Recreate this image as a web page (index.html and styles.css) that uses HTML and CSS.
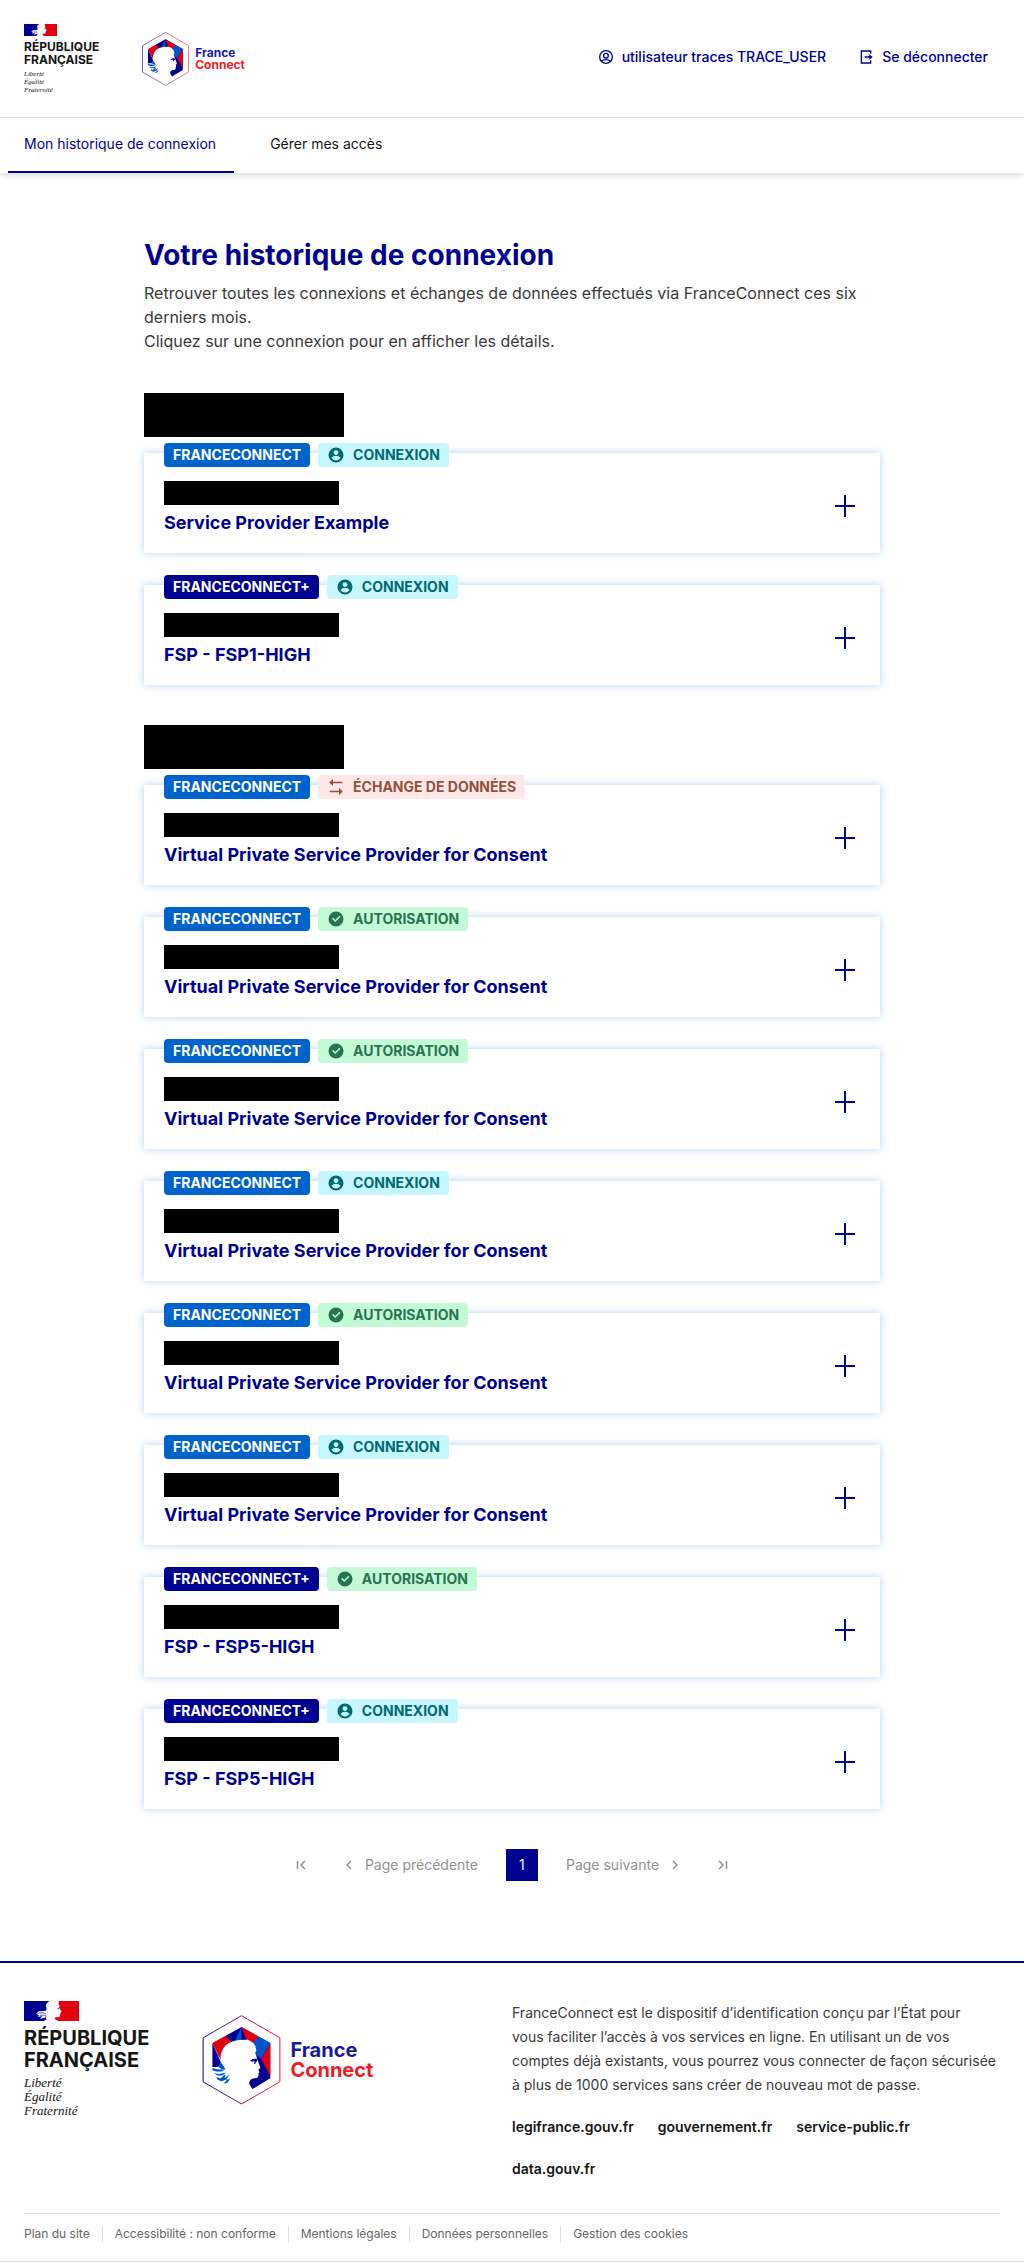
FILE: index.html
```html
<!DOCTYPE html>
<html lang="fr">
<head>
<meta charset="utf-8">
<meta name="viewport" content="width=device-width, initial-scale=1">
<title>Votre historique de connexion</title>
<link rel="stylesheet" href="styles.css">
</head>
<body>
<svg class="sprite" aria-hidden="true">
  <defs>
    <linearGradient id="hex-stroke" x1="0" y1="0" x2="1" y2="0">
      <stop offset="0" stop-color="#000091"/>
      <stop offset="0.1" stop-color="#1c1a94"/>
      <stop offset="0.9" stop-color="#e0253c"/>
      <stop offset="1" stop-color="#ed1c24"/>
    </linearGradient>
    <symbol id="flag" viewBox="0 0 165 60">
      <path fill="#fff" d="M0 0h165v60H0z"/>
      <path fill="#000091" d="M0 0h76l-6 5-5 8 3 8-2 8-9 1-13 1-8 8 9-2-7 6 8-1-5 6 14-3-7 8 12-2 8-5-4 5 5 3-10 6H0z"/>
      <path fill="none" stroke="#000091" stroke-width="2" d="M44 36l14-1 8 5M48 43l12-1 7 4"/>
      <path fill="#e1000f" d="M165 0h-62l2 4-2 5 4 5-2 5 3 5 5 8-4 3 1 4-3 2 1 5-4 3-9-1-3 5 5 4 6 3h62z"/>
      <path fill="#7d7d88" d="M98 22l8-2 1 2-3 5-2-2z"/>
    </symbol>
    <symbol id="hexagon" viewBox="12 14 236 272">
      <path fill="#fff" stroke="url(#hex-stroke)" stroke-width="3" d="M130 16l116 67v133l-116 67-116-67V83z"/>
      <path fill="#000091" d="M130 50L82 77l-7 30 75 0 6 60-6 50 13 21 54-33V99z"/>
      <path fill="#0053cc" d="M130 50l-24 50h42z"/>
      <path fill="#000091" d="M130 50v50h20z"/>
      <path fill="#e1000f" d="M42 99l40-22 20 22-20 40-12 18z"/>
      <path fill="#000091" d="M42 99l26 58-8 14H42z"/>
      <path fill="#e1000f" d="M130 50l53 30-12 16-20 10z"/>
      <path fill="#0053cc" d="M183 80l34 19-27 48-26-19v-32z"/>
      <path fill="#e1000f" d="M217 99v100l-27-51z"/>
      <path fill="#fff" d="M83 105q20-18 67-16l15 9 7 10 3 14-4 6 3 8 4 13 9 23-1 4-5 2 3 9-3 3 1 6-4 8-13 2-8 4-4 8 1 12 4 6 7 6-35 28-70-30 20-15 12-20 3-15-20-22-9-16q0-30 17-47z"/>
      <path fill="#0053cc" d="M68 157l14 22-12-2-10-6z"/>
      <path fill="#0053cc" d="M42 174l14 4 24 1-10 6-16 0-12-4zM46 190l18 2 20-4-12 9-14 0zM54 201l12 5 16-14-3 13 14-12-8 16-16 5-12-5zM78 219l8-9 10-4-7 11-10 5z"/>
      <path fill="#000091" d="M156 152l8-6 14 0-2 3 2 2-7 11-3-1 2-8-8 2z"/>
    </symbol>
    <symbol id="user" viewBox="0 0 24 24">
      <path fill="currentColor" fill-rule="evenodd" d="M12 2a10 10 0 1 0 0 20 10 10 0 0 0 0-20zM12 5.500a3.300 3.300 0 1 1 0 6.600 3.300 3.300 0 0 1 0-6.600zM6 16c1.300-1.900 3.500-3 6-3s4.700 1.100 6 3c-1.300 2-3.500 3.200-6 3.200S7.300 18 6 16z"/>
    </symbol>
    <symbol id="user-line" viewBox="0 0 24 24">
      <g fill="none" stroke="currentColor" stroke-width="2"><circle cx="12" cy="12" r="9.500"/><circle cx="12" cy="10" r="3.500"/><path d="M5.500 18.500C8 15.200 16 15.200 18.500 18.500"/></g>
    </symbol>
    <symbol id="logout" viewBox="0 0 24 24">
      <path fill="currentColor" d="M4 22V2h16v5h-2V4H6v16h12v-3h2v5zM17 16v-3h-7v-2h7V8l5 4z"/>
    </symbol>
    <symbol id="exchange" viewBox="0 0 24 24">
      <path fill="currentColor" d="M20.500 7H8v3.800L3 6l5-4.800V5h12.500zM3.500 17H16v-3.800l5 4.800-5 4.800V19H3.500z"/>
    </symbol>
    <symbol id="check" viewBox="0 0 24 24">
      <path fill="currentColor" fill-rule="evenodd" d="M12 2a10 10 0 1 0 0 20 10 10 0 0 0 0-20zM11 16l7-7-1.400-1.400-5.600 5.600-2.800-2.800L6.800 11.800z"/>
    </symbol>
    <symbol id="plus" viewBox="0 0 22 22">
      <path fill="currentColor" d="M10 0h2v10h9v2h-9v10h-2V12H1v-2h9z"/>
    </symbol>
    <symbol id="chevron-left" viewBox="0 0 16 16"><path fill="none" stroke="currentColor" stroke-width="1.500" d="M10 4L6 8l4 4"/></symbol>
    <symbol id="chevron-right" viewBox="0 0 16 16"><path fill="none" stroke="currentColor" stroke-width="1.500" d="M6 4l4 4-4 4"/></symbol>
    <symbol id="first" viewBox="0 0 16 16"><path fill="none" stroke="currentColor" stroke-width="1.500" d="M12 4L8 8l4 4M4.500 4v8"/></symbol>
    <symbol id="last" viewBox="0 0 16 16"><path fill="none" stroke="currentColor" stroke-width="1.500" d="M4 4l4 4-4 4M11.500 4v8"/></symbol>
  </defs>
</svg>

<header class="header">
  <div class="header-top">
    <div class="brand">
      <div class="rf">
        <svg class="rf-flag"><use href="#flag"/></svg>
        <p class="rf-name">RÉPUBLIQUE<br>FRANÇAISE</p>
        <p class="rf-motto">Liberté<br>Égalité<br>Fraternité</p>
      </div>
      <a class="fc" href="#">
        <svg class="fc-hex"><use href="#hexagon"/></svg>
        <span class="fc-name"><span>France</span><span class="fc-red">Connect</span></span>
      </a>
    </div>
    <div class="tools">
      <a class="tool" href="#"><svg class="icon-16"><use href="#user-line"/></svg>utilisateur traces TRACE_USER</a>
      <a class="tool" href="#"><svg class="icon-16"><use href="#logout"/></svg>Se déconnecter</a>
    </div>
  </div>
  <nav class="nav">
    <a class="nav-link nav-active" href="#" aria-current="page">Mon historique de connexion</a>
    <a class="nav-link" href="#">Gérer mes accès</a>
  </nav>
</header>

<main class="main">
  <h1 class="title">Votre historique de connexion</h1>
  <p class="intro">Retrouver toutes les connexions et échanges de données effectués via FranceConnect ces six derniers mois.<br>Cliquez sur une connexion pour en afficher les détails.</p>

  <section class="group">
    <div class="month"></div>
    <button class="card" type="button">
      <span class="card-text">
        <span class="badges"><span class="badge fc-badge">FRANCECONNECT</span><span class="badge login"><svg class="icon-18"><use href="#user"/></svg>CONNEXION</span></span>
        <span class="date"></span><span class="provider">Service Provider Example</span>
      </span>
      <svg class="plus"><use href="#plus"/></svg>
    </button>
    <button class="card" type="button">
      <span class="card-text">
        <span class="badges"><span class="badge fcplus-badge">FRANCECONNECT+</span><span class="badge login"><svg class="icon-18"><use href="#user"/></svg>CONNEXION</span></span>
        <span class="date"></span><span class="provider">FSP - FSP1-HIGH</span>
      </span>
      <svg class="plus"><use href="#plus"/></svg>
    </button>
  </section>

  <section class="group">
    <div class="month"></div>
    <button class="card" type="button">
      <span class="card-text">
        <span class="badges"><span class="badge fc-badge">FRANCECONNECT</span><span class="badge data"><svg class="icon-18"><use href="#exchange"/></svg>ÉCHANGE DE DONNÉES</span></span>
        <span class="date"></span><span class="provider">Virtual Private Service Provider for Consent</span>
      </span>
      <svg class="plus"><use href="#plus"/></svg>
    </button>
    <button class="card" type="button">
      <span class="card-text">
        <span class="badges"><span class="badge fc-badge">FRANCECONNECT</span><span class="badge consent"><svg class="icon-18"><use href="#check"/></svg>AUTORISATION</span></span>
        <span class="date"></span><span class="provider">Virtual Private Service Provider for Consent</span>
      </span>
      <svg class="plus"><use href="#plus"/></svg>
    </button>
    <button class="card" type="button">
      <span class="card-text">
        <span class="badges"><span class="badge fc-badge">FRANCECONNECT</span><span class="badge consent"><svg class="icon-18"><use href="#check"/></svg>AUTORISATION</span></span>
        <span class="date"></span><span class="provider">Virtual Private Service Provider for Consent</span>
      </span>
      <svg class="plus"><use href="#plus"/></svg>
    </button>
    <button class="card" type="button">
      <span class="card-text">
        <span class="badges"><span class="badge fc-badge">FRANCECONNECT</span><span class="badge login"><svg class="icon-18"><use href="#user"/></svg>CONNEXION</span></span>
        <span class="date"></span><span class="provider">Virtual Private Service Provider for Consent</span>
      </span>
      <svg class="plus"><use href="#plus"/></svg>
    </button>
    <button class="card" type="button">
      <span class="card-text">
        <span class="badges"><span class="badge fc-badge">FRANCECONNECT</span><span class="badge consent"><svg class="icon-18"><use href="#check"/></svg>AUTORISATION</span></span>
        <span class="date"></span><span class="provider">Virtual Private Service Provider for Consent</span>
      </span>
      <svg class="plus"><use href="#plus"/></svg>
    </button>
    <button class="card" type="button">
      <span class="card-text">
        <span class="badges"><span class="badge fc-badge">FRANCECONNECT</span><span class="badge login"><svg class="icon-18"><use href="#user"/></svg>CONNEXION</span></span>
        <span class="date"></span><span class="provider">Virtual Private Service Provider for Consent</span>
      </span>
      <svg class="plus"><use href="#plus"/></svg>
    </button>
    <button class="card" type="button">
      <span class="card-text">
        <span class="badges"><span class="badge fcplus-badge">FRANCECONNECT+</span><span class="badge consent"><svg class="icon-18"><use href="#check"/></svg>AUTORISATION</span></span>
        <span class="date"></span><span class="provider">FSP - FSP5-HIGH</span>
      </span>
      <svg class="plus"><use href="#plus"/></svg>
    </button>
    <button class="card" type="button">
      <span class="card-text">
        <span class="badges"><span class="badge fcplus-badge">FRANCECONNECT+</span><span class="badge login"><svg class="icon-18"><use href="#user"/></svg>CONNEXION</span></span>
        <span class="date"></span><span class="provider">FSP - FSP5-HIGH</span>
      </span>
      <svg class="plus"><use href="#plus"/></svg>
    </button>
  </section>

  <nav class="pages" aria-label="Pagination">
    <button class="page-link" type="button" disabled aria-label="Première page"><svg class="icon-16"><use href="#first"/></svg></button>
    <button class="page-link" type="button" disabled><svg class="icon-16"><use href="#chevron-left"/></svg>Page précédente</button>
    <a class="page-current" href="#" aria-current="page">1</a>
    <button class="page-link" type="button" disabled>Page suivante<svg class="icon-16"><use href="#chevron-right"/></svg></button>
    <button class="page-link" type="button" disabled aria-label="Dernière page"><svg class="icon-16"><use href="#last"/></svg></button>
  </nav>
</main>

<footer class="footer">
  <div class="footer-body">
    <div class="brand brand-large">
      <div class="rf">
        <svg class="rf-flag"><use href="#flag"/></svg>
        <p class="rf-name">RÉPUBLIQUE<br>FRANÇAISE</p>
        <p class="rf-motto">Liberté<br>Égalité<br>Fraternité</p>
      </div>
      <a class="fc" href="#">
        <svg class="fc-hex"><use href="#hexagon"/></svg>
        <span class="fc-name"><span>France</span><span class="fc-red">Connect</span></span>
      </a>
    </div>
    <div class="about">
      <p class="about-text">FranceConnect est le dispositif d’identification conçu par l’État pour<br>vous faciliter l’accès à vos services en ligne. En utilisant un de vos<br>comptes déjà existants, vous pourrez vous connecter de façon sécurisée à plus de 1000 services sans créer de nouveau mot de passe.</p>
      <ul class="sites">
        <li><a href="#">legifrance.gouv.fr</a></li>
        <li><a href="#">gouvernement.fr</a></li>
        <li><a href="#">service-public.fr</a></li>
        <li><a href="#">data.gouv.fr</a></li>
      </ul>
    </div>
  </div>
  <ul class="legal">
    <li><a href="#">Plan du site</a></li>
    <li><a href="#">Accessibilité : non conforme</a></li>
    <li><a href="#">Mentions légales</a></li>
    <li><a href="#">Données personnelles</a></li>
    <li><a href="#">Gestion des cookies</a></li>
  </ul>
</footer>
</body>
</html>
```
FILE: styles.css
```css
* { box-sizing: border-box; }
body, h1, p, ul { margin: 0; padding: 0; }
ul { list-style: none; }
a { color: inherit; text-decoration: none; }
button { font: inherit; border: 0; background: none; cursor: pointer; }
svg { display: block; flex: none; }

body {
  background: #fff;
  color: #161616;
  font: 400 14px/24px Inter, "Noto Sans", sans-serif;
}

.sprite { position: absolute; width: 0; height: 0; }
.icon-16 { width: 16px; height: 16px; }
.icon-18 { width: 18px; height: 18px; }

/* Header */
.header { box-shadow: 0 2px 6px rgba(0, 0, 18, .16); }
.header-top {
  display: flex;
  align-items: flex-start;
  justify-content: space-between;
  padding: 24px 24px 23px;
  border-bottom: 1px solid #ddd;
}
.brand { display: flex; align-items: center; gap: 43px; }
.rf-flag { width: 33px; height: 12px; }
.rf-name { margin-top: 4px; font-size: 12px; line-height: 13px; font-weight: 700; }
.rf-motto { margin-top: 4px; font: italic 7px/8px "Liberation Serif", serif; }
.fc { display: flex; align-items: center; gap: 6px; }
.fc-hex { width: 47px; height: 54px; }
.fc-name {
  display: flex;
  flex-direction: column;
  color: #1b1a9c;
  font-size: 12px;
  line-height: 12px;
  font-weight: 700;
}
.fc-red { color: #ed1c24; }

.tools { display: flex; gap: 8px; padding-top: 21px; }
.tool {
  display: flex;
  align-items: center;
  gap: 8px;
  padding: 0 12px;
  color: #000091;
  font-weight: 500;
}

.nav { display: flex; gap: 20px; padding: 0 8px; }
.nav-link {
  padding: 14px 18px 15px 16px;
  border-bottom: 2px solid transparent;
}
.nav-active { color: #000091; border-color: #000091; }

/* Connection history */
.main { max-width: 736px; margin: 0 auto; padding: 64px 0 80px; }
.title { color: #000091; font-size: 28px; line-height: 36px; font-weight: 700; }
.intro { margin-top: 8px; color: #3a3a3a; font-size: 16px; }

.group { display: flex; flex-direction: column; gap: 32px; margin-top: 40px; }
.month { width: 200px; height: 44px; margin-bottom: -16px; background: #000; }

.card {
  display: flex;
  align-items: center;
  justify-content: space-between;
  padding: 0 24px 18px 20px;
  background: #fff;
  box-shadow: 0 0 8px rgba(0, 99, 203, .3);
  color: #000091;
  text-align: left;
}
.card-text { display: flex; flex-direction: column; margin-top: -10px; }
.badges { display: flex; flex-wrap: wrap; gap: 8px; }
.badge {
  display: flex;
  align-items: center;
  gap: 8px;
  padding: 0 9px;
  border-radius: 4px;
  font-weight: 700;
}
.fc-badge { background: #0063cb; color: #fff; }
.fcplus-badge { background: #000091; color: #fff; }
.login { background: #c7f6fc; color: #006a6f; }
.data { background: #fee7e7; color: #8d533e; }
.consent { background: #c3fad5; color: #297254; }
.date { width: 175px; height: 24px; margin: 14px 0 6px; background: #000; }
.provider { font-size: 18px; font-weight: 700; }
.plus { width: 22px; height: 22px; margin-top: 24px; }

.pages {
  display: flex;
  align-items: center;
  justify-content: center;
  gap: 8px;
  margin-top: 40px;
}
.page-link {
  display: flex;
  align-items: center;
  gap: 8px;
  padding: 0 12px;
  color: #929292;
}
.page-current {
  width: 32px;
  margin: 0 8px;
  background: #000091;
  color: #f5f5fe;
  line-height: 32px;
  text-align: center;
}

/* Footer */
.footer {
  padding: 38px 24px 0;
  border-top: 2px solid #000091;
  border-bottom: 1px solid #ddd;
}
.footer-body {
  display: grid;
  grid-template-columns: 1fr 1fr;
  align-items: start;
  padding-bottom: 32px;
}
.brand-large { gap: 53px; }
.brand-large .rf-flag { width: 55px; height: 20px; }
.brand-large .rf-name { margin-top: 6px; font-size: 20px; line-height: 22px; }
.brand-large .rf-motto { margin-top: 5px; font-size: 13px; line-height: 14px; }
.brand-large .fc { gap: 9px; }
.brand-large .fc-hex { width: 79px; height: 90px; }
.brand-large .fc-name { font-size: 20px; line-height: 20px; }

.about-text { color: #3a3a3a; }
.sites { display: flex; flex-wrap: wrap; gap: 18px 24px; margin-top: 18px; font-weight: 600; }

.legal {
  display: flex;
  flex-wrap: wrap;
  padding: 12px 0 19px;
  border-top: 1px solid #ddd;
  color: #666;
  font-size: 12px;
  line-height: 16px;
}
.legal li + li { margin-left: 12px; padding-left: 12px; border-left: 1px solid #ddd; }
```
